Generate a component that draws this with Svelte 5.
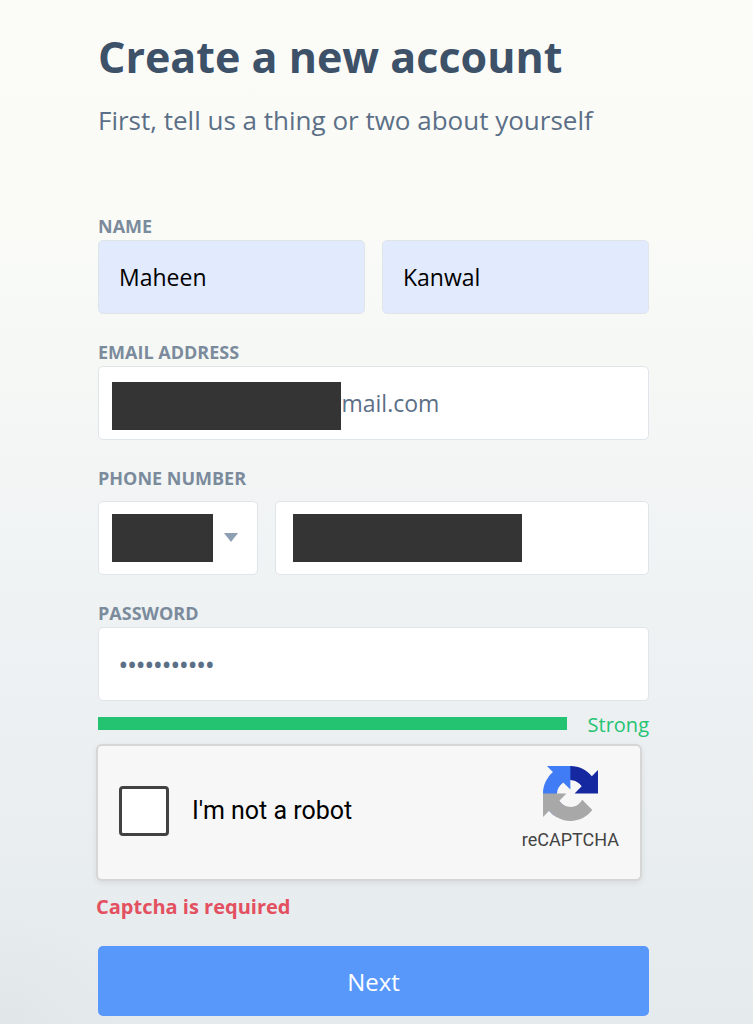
<script lang="ts">
    let firstName = 'Maheen';
    let lastName = 'Kanwal';
    let email = 'gmail.com';
    let country = '';
    let phone = '';
    let password = 'maheen12345';
    let human = false;
</script>

<main>
    <header>
        <h1>Create a new account</h1>
        <p>First, tell us a thing or two about yourself</p>
    </header>

    <form on:submit|preventDefault>
        <div class="group">
            <label for="first-name">Name</label>
            <div class="row">
                <input id="first-name" class="filled" type="text" bind:value={firstName} />
                <input class="filled" type="text" aria-label="Last name" bind:value={lastName} />
            </div>
        </div>

        <div class="group">
            <label for="email">Email address</label>
            <div class="field">
                <input id="email" class="email" type="text" bind:value={email} />
                <span class="mask wide"></span>
            </div>
        </div>

        <div class="group phone">
            <label for="phone">Phone number</label>
            <div class="row">
                <div class="field country">
                    <select aria-label="Country code" bind:value={country}>
                        <option value=""></option>
                    </select>
                    <span class="mask"></span>
                    <span class="arrow"></span>
                </div>
                <div class="field number">
                    <input id="phone" type="tel" bind:value={phone} />
                    <span class="mask wide inset"></span>
                </div>
            </div>
        </div>

        <div class="group">
            <label for="password">Password</label>
            <input id="password" type="password" bind:value={password} />
        </div>

        <div class="strength">
            <div class="bar"></div>
            <span>Strong</span>
        </div>

        <div class="captcha">
            <label>
                <input type="checkbox" bind:checked={human} />
                I'm not a robot
            </label>
            <div class="brand">
                <svg viewBox="0 0 64 64" aria-hidden="true">
                    <path
                        fill="#1528a0"
                        d="M64 31.955l-.033-1.37V4.687l-7.16 7.16C50.948 4.674 42.033.093 32.05.093c-10.4 0-19.622 4.96-25.458 12.64l11.736 11.86a15.55 15.55 0 0 1 4.754-5.334c2.05-1.6 4.952-2.906 8.968-2.906.485 0 .86.057 1.135.163 4.976.393 9.288 3.14 11.828 7.124l-8.307 8.307L64 31.953"
                    />
                    <path
                        fill="#3f7cf5"
                        d="M31.862.094l-1.37.033H4.594l7.16 7.16C4.58 13.147 0 22.06 0 32.046c0 10.4 4.96 19.622 12.64 25.458L24.5 45.768a15.55 15.55 0 0 1-5.334-4.754c-1.6-2.05-2.906-4.952-2.906-8.968 0-.485.057-.86.163-1.135.393-4.976 3.14-9.288 7.124-11.828l8.307 8.307L31.86.095"
                    />
                    <path
                        fill="#a8a8a8"
                        d="M.001 32.045l.033 1.37v25.898l7.16-7.16c5.86 7.173 14.774 11.754 24.76 11.754 10.4 0 19.622-4.96 25.458-12.64l-11.736-11.86a15.55 15.55 0 0 1-4.754 5.334c-2.05 1.6-4.952 2.906-8.968 2.906-.485 0-.86-.057-1.135-.163-4.976-.393-9.288-3.14-11.828-7.124l8.307-8.307c-10.522.04-22.4.066-27.295-.005"
                    />
                </svg>
                <span>reCAPTCHA</span>
            </div>
        </div>
        <p class="error">Captcha is required</p>

        <button type="submit">Next</button>
    </form>
</main>

<style>
    main {
        box-sizing: border-box;
        min-height: 100vh;
        padding: 28px 104px 8px 98px;
        font-family: 'Open Sans', sans-serif;
        color: #5b6f87;
        background: radial-gradient(circle at 0 100%, rgba(120, 120, 130, 0.04), transparent 130px),
            linear-gradient(#fbfbf8 0%, #fafbf7 22%, #eef2f3 60%, #e5eaed 100%);
    }
    h1 {
        margin: 0;
        font-size: 43px;
        line-height: 58px;
        font-weight: 700;
        color: #3d5169;
    }
    header p {
        margin: 16px 0 76px;
        font-size: 26px;
        line-height: 36px;
    }
    .group {
        margin-bottom: 26px;
    }
    .group > label {
        display: block;
        margin-bottom: 2px;
        font-size: 18px;
        line-height: 24px;
        font-weight: 700;
        text-transform: uppercase;
        color: #7b8b9c;
    }
    .row {
        display: flex;
        gap: 17px;
    }
    .row > input {
        flex: 1;
        min-width: 0;
    }
    .phone .row {
        margin-top: 11px;
    }
    .field {
        position: relative;
    }
    .country {
        flex: 3;
    }
    .number {
        flex: 7;
    }
    .group input,
    select {
        display: block;
        box-sizing: border-box;
        width: 100%;
        height: 74px;
        padding: 0 20px;
        border: 1px solid #e0e5ea;
        border-radius: 5px;
        background-color: #fff;
        font-family: inherit;
        font-size: 23px;
        color: #5b6f87;
        appearance: none;
    }
    .group input.filled {
        background-color: #e2eafe;
        color: #000;
    }
    .group input.email {
        padding-left: 230px;
    }
    .group input[type='password'] {
        font-weight: 600;
    }
    .mask {
        position: absolute;
        top: 13px;
        left: 14px;
        width: 101px;
        height: 48px;
        background-color: #343434;
    }
    .mask.wide {
        width: 229px;
    }
    .email + .mask {
        top: 16px;
    }
    .mask.inset {
        left: 18px;
    }
    .arrow {
        position: absolute;
        top: 32px;
        right: 20px;
        border: 7px solid transparent;
        border-top: 9px solid #8f9fb3;
        border-bottom: 0;
    }
    .strength {
        display: flex;
        align-items: center;
        gap: 21px;
        margin-top: -16px;
        font-size: 20px;
        line-height: 28px;
        color: #24c372;
    }
    .bar {
        flex: 1;
        height: 13px;
        margin-bottom: 3px;
        background-color: #24c372;
    }
    .captcha {
        display: flex;
        align-items: center;
        justify-content: space-between;
        box-sizing: border-box;
        height: 137px;
        margin: 5px 7px 0 -2px;
        padding: 0 21px;
        border: 2px solid #d6d6d6;
        border-radius: 6px;
        background-color: #f7f7f7;
        box-shadow: 0 2px 6px rgba(0, 0, 0, 0.08);
        font-family: Roboto, sans-serif;
    }
    .captcha label {
        display: flex;
        align-items: center;
        gap: 23px;
        margin-bottom: 4px;
        font-size: 25px;
        color: #000;
    }
    .captcha input {
        width: 50px;
        height: 50px;
        margin: 0;
        border: 3px solid #424242;
        border-radius: 4px;
        background-color: #fff;
        appearance: none;
    }
    .captcha input:checked {
        background-color: #4285f4;
    }
    .brand {
        display: flex;
        flex-direction: column;
        align-items: center;
        gap: 7px;
        margin-bottom: 8px;
        font-size: 18px;
        line-height: 24px;
        color: #444;
    }
    .brand svg {
        width: 55px;
        height: 55px;
    }
    .error {
        margin: 12px 0 25px -2px;
        font-size: 20px;
        line-height: 28px;
        font-weight: 700;
        color: #e35060;
    }
    button {
        display: block;
        width: 100%;
        height: 70px;
        border: 0;
        border-radius: 5px;
        background-color: #5998fb;
        font-family: inherit;
        font-size: 24px;
        color: #fff;
        cursor: pointer;
    }
</style>
